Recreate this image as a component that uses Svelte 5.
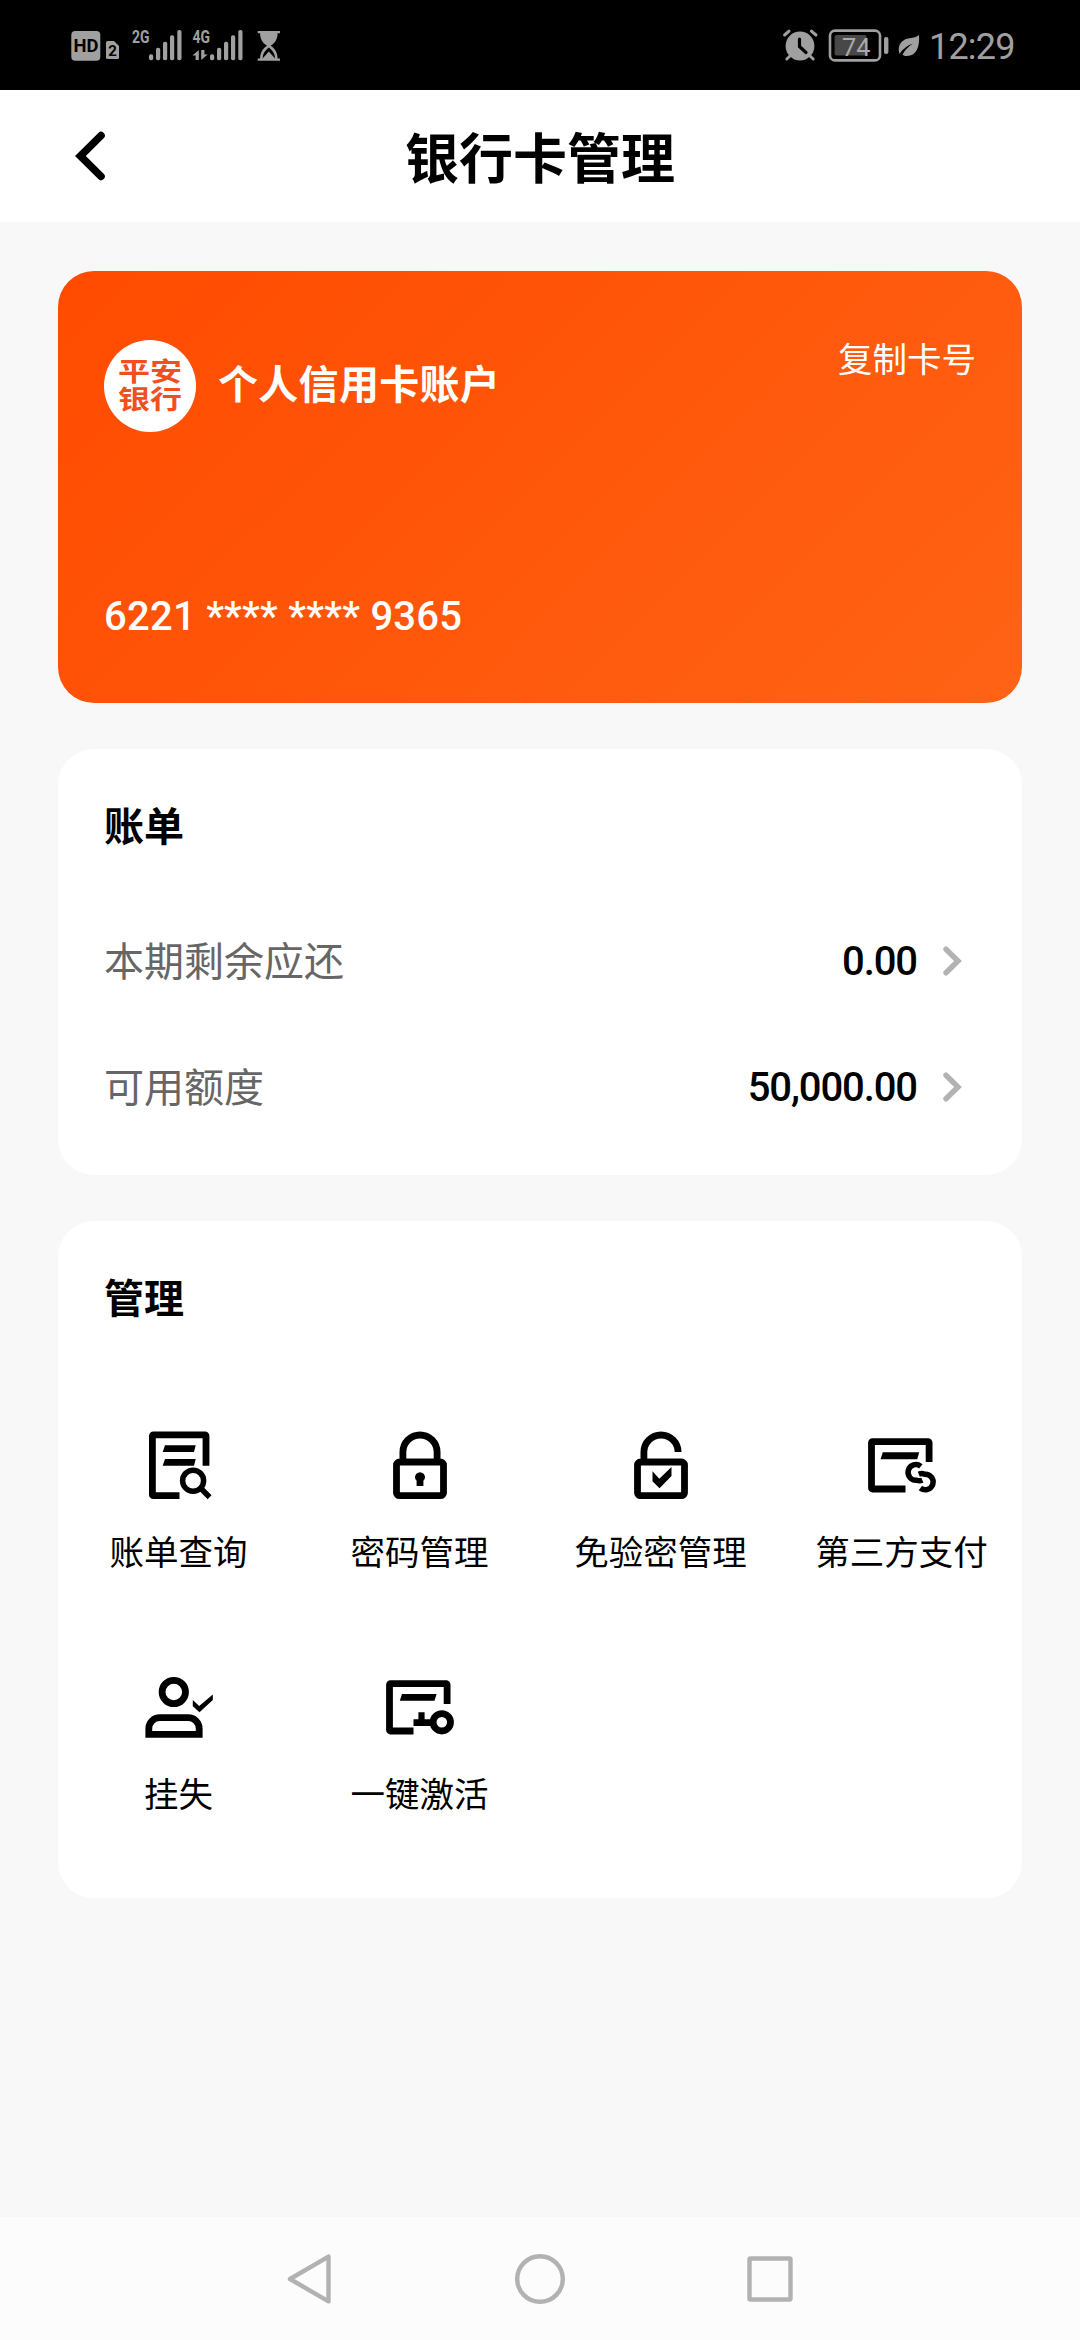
<script>
let bills = [
	{ label: '本期剩余应还', value: '0.00' },
	{ label: '可用额度', value: '50,000.00' }
];

// line: thick outline, thin: small detail outline, fill: solid shapes
let actions = [
	{
		label: '账单查询',
		line: 'M67 40.7V10.8a1 1 0 0 0 -1 -1H14.4a1 1 0 0 0 -1 1V69.7a1 1 0 0 0 1 1H40.5',
		thin: 'M43.6 55.7a10.5 10.5 0 1 0 21 0a10.5 10.5 0 1 0 -21 0M61.5 63L70.6 72.2',
		fill: 'M26 20.3H56.7L55 27H23.7zM26 34H56.7L55 40.7H23.7z'
	},
	{
		label: '密码管理',
		line: 'M19.5 37H60.5a3 3 0 0 1 3 3V67.7a3 3 0 0 1 -3 3H19.5a3 3 0 0 1 -3 -3V40a3 3 0 0 1 3 -3zM22.9 37V27.1a17.1 17.1 0 0 1 34.2 0V37',
		thin: '',
		fill: 'M36.6 61V55.8a5 5 0 1 1 6.8 0V61z'
	},
	{
		label: '免验密管理',
		line: 'M19.5 37H60.5a3 3 0 0 1 3 3V67.7a3 3 0 0 1 -3 3H19.5a3 3 0 0 1 -3 -3V40a3 3 0 0 1 3 -3zM22.9 37V27.1a17.1 17.1 0 0 1 34.2 0',
		thin: '',
		fill: 'M31.5 46.3L38.3 53.7L50.5 42V51L38.5 63.3L31.5 56.3z'
	},
	{
		label: '第三方支付',
		line: 'M67.1 37V17.7a1 1 0 0 0 -1 -1H10.5a1 1 0 0 0 -1 1V63a1 1 0 0 0 1 1H43.5',
		thin: 'M58.8 41.4A7.8 7.8 0 1 0 54.6 55.2Q57.4 56.4 60.4 55.2M58.4 63A7.8 7.8 0 1 0 62.6 49.2Q59.8 48 56.8 49.2',
		fill: 'M20.8 27.3H57.2L55.2 34.3H18.5z'
	},
	{
		label: '挂失',
		line: 'M23.1 25a11.7 11.7 0 1 0 23.4 0a11.7 11.7 0 1 0 -23.4 0M9.8 67.3V61.7a11 11 0 0 1 11 -11H49.2a11 11 0 0 1 11 11V67.3z',
		thin: '',
		fill: 'M53.8 33L60.2 39L73.8 27.5V33L60.5 45.3L53.8 39.3z'
	},
	{
		label: '一键激活',
		line: 'M67.1 37V17.7a1 1 0 0 0 -1 -1H10.5a1 1 0 0 0 -1 1V63a1 1 0 0 0 1 1H33.5M53.1 55.3a8.7 8.7 0 1 0 17.4 0a8.7 8.7 0 1 0 -17.4 0M33.5 55.7H53',
		thin: '',
		fill: 'M22 27H56.6L54.5 33.7H19.8zM38.4 45.3H44.6V53H38.4z'
	}
];

let bars = [
	{ x: 81, y: 29.3 },
	{ x: 88, y: 22.7 },
	{ x: 95, y: 16.7 },
	{ x: 102, y: 10.3 },
	{ x: 109.3, y: 5 }
];
</script>

<div class="screen">
	<div class="status">
		<svg width="216" height="40" viewBox="0 0 216 40" fill="#a0a0a0">
			<rect x="3.3" y="6" width="29" height="29.7" rx="4" />
			<text class="bold" x="5.6" y="27.4" font-size="18" textLength="25" lengthAdjust="spacingAndGlyphs" fill="#000">HD</text>
			<path d="M39.5 16H46L51 21V32.5a1.5 1.5 0 0 1 -1.5 1.5H39.5a1.5 1.5 0 0 1 -1.5 -1.5V17.5a1.5 1.5 0 0 1 1.5 -1.5z" />
			<text class="bold" x="40.2" y="30.8" font-size="15" fill="#000">2</text>
			<text class="bold" x="64" y="18.4" font-size="18.5" textLength="17.5" lengthAdjust="spacingAndGlyphs">2G</text>
			<text class="bold" x="124.5" y="18.4" font-size="18.5" textLength="17.5" lengthAdjust="spacingAndGlyphs">4G</text>
			{#each bars as bar}
				<rect x={bar.x} y={bar.y} width="4.2" height={35.3 - bar.y} rx="1.8" />
				<rect x={bar.x + 61} y={bar.y} width="4.2" height={35.3 - bar.y} rx="1.8" />
			{/each}
			<path d="M124.4 30.5L130.8 25V35H127.6V30.5zM133.2 25H136.4V29.6H139.6L133.2 35z" />
			<path d="M189.7 6H212V8.2H209.6C209.6 14 207 18 202.6 20.8C207 23.6 209.6 27.8 209.6 33.5H212V35.7H189.7V33.5H192.1C192.1 27.8 194.7 23.6 199.1 20.8C194.7 18 192.1 14 192.1 8.2H189.7z" />
			<path d="M194.6 33.4C194.8 28.8 197 25.4 200.8 22.6C204.6 25.4 206.9 28.8 207.1 33.4L200.8 26.4z" fill="#000" />
		</svg>
		<div class="right">
			<svg width="149" height="40" viewBox="0 0 149 40" fill="#a0a0a0">
				<circle cx="20" cy="21" r="14.4" />
				<path d="M4.6 10L9 6.2M36 10L31.4 6.2M10.5 30.5L6.8 34M29.5 30.5L33.2 34" stroke="#a0a0a0" stroke-width="3" stroke-linecap="round" />
				<path d="M19.5 14V21.5L26 27.5" fill="none" stroke="#000" stroke-width="3.2" stroke-linecap="round" />
				<rect x="50" y="5.6" width="50" height="29.8" rx="5" fill="none" stroke="#a0a0a0" stroke-width="2.6" />
				<rect x="54.6" y="10" width="32" height="20.5" rx="2" fill="#484848" />
				<text x="62" y="30.6" font-size="26.5" textLength="28.5" lengthAdjust="spacingAndGlyphs" fill="#aaa">74</text>
				<rect x="104" y="12" width="4.4" height="17" rx="2" />
				<path d="M139 10C140 22 136 31 127 31C125 31 123.5 30.5 122.5 29.5C125 25 128.5 21.5 133 18.5C127 20.5 122.5 24 119.5 29C116.5 19 123 13.5 131 13C135 12.5 137 11.5 139 10z" />
			</svg>
			<span class="time">12:29</span>
		</div>
	</div>

	<div class="header">
		<svg width="40" height="60" viewBox="0 0 40 60">
			<path d="M31 9.6L10.4 30L31 50.4" fill="none" stroke="#000" stroke-width="7.6" stroke-linecap="round" />
		</svg>
		<h1>银行卡管理</h1>
	</div>

	<div class="content">
		<div class="card">
			<div class="account">
				<div class="logo">
					<div class="mark"><span>平安</span><span>银行</span></div>
				</div>
				<span class="name">个人信用卡账户</span>
				<span class="copy">复制卡号</span>
			</div>
			<div class="number">6221 **** **** 9365</div>
		</div>

		<div class="panel bill">
			<h2>账单</h2>
			{#each bills as bill}
				<div class="row">
					<span class="label">{bill.label}</span>
					<span class="value">{bill.value}</span>
					<svg width="24" height="36" viewBox="0 0 24 36">
						<path d="M5 6.2L17 18L5 29.8" fill="none" stroke="#b2b2b2" stroke-width="5.4" stroke-linecap="round" />
					</svg>
				</div>
			{/each}
		</div>

		<div class="panel manage">
			<h2>管理</h2>
			<div class="actions">
				{#each actions as action}
					<div class="action">
						<svg width="80" height="80" viewBox="0 0 80 80">
							<path d={action.line} fill="none" stroke="#000" stroke-width="6.8" />
							<path d={action.thin} fill="none" stroke="#000" stroke-width="5.5" />
							<path d={action.fill} />
						</svg>
						<span>{action.label}</span>
					</div>
				{/each}
			</div>
		</div>
	</div>

	<div class="nav">
		<svg width="52" height="52" viewBox="0 0 52 52">
			<path d="M5 26L43.5 3.6V48.4z" />
		</svg>
		<svg width="52" height="52" viewBox="0 0 52 52">
			<circle cx="26" cy="26" r="22.8" />
		</svg>
		<svg width="52" height="52" viewBox="0 0 52 52">
			<rect x="5.5" y="5.5" width="41" height="41" rx="1" />
		</svg>
	</div>
</div>

<style>
:global(body) {
	margin: 0;
}

.screen {
	display: flex;
	flex-direction: column;
	width: 1080px;
	height: 2340px;
	background: #f8f8f8;
	color: #000;
	font-family: Roboto, "Noto Sans CJK SC", sans-serif;
}

svg {
	display: block;
	flex: none;
}

h1, h2 {
	margin: 0;
	font-weight: bold;
}

.status {
	display: flex;
	justify-content: space-between;
	align-items: center;
	height: 90px;
	padding: 0 64px 0 68px;
	background: #000;
	box-sizing: border-box;
}

.bold {
	font-weight: bold;
}

.right {
	display: flex;
	align-items: center;
}

.time {
	width: 87px;
	color: #a0a0a0;
	font-size: 36px;
	line-height: 40px;
	letter-spacing: -0.8px;
	padding-top: 4px;
	white-space: nowrap;
}

.header {
	display: grid;
	grid-template-columns: 40px 1fr 40px;
	align-items: center;
	height: 132px;
	padding: 0 70px;
	background: #fff;
}

h1 {
	font-size: 54px;
	line-height: 80px;
	text-align: center;
	padding-top: 10px;
}

.content {
	display: flex;
	flex-direction: column;
	flex: 1;
	padding: 49px 58px 0;
}

.card {
	display: flex;
	flex-direction: column;
	justify-content: space-between;
	height: 432px;
	padding: 69px 46px 62px;
	box-sizing: border-box;
	border-radius: 36px;
	background: linear-gradient(135deg, #ff4b00, #ff6315);
	color: #fff;
}

.account {
	display: flex;
	align-items: center;
}

.logo {
	display: flex;
	align-items: center;
	justify-content: center;
	width: 92px;
	height: 92px;
	border-radius: 50%;
	background: #fff;
}

.mark {
	display: flex;
	flex-direction: column;
	color: #f0501e;
	font-size: 32px;
	line-height: 34px;
	font-weight: bold;
	transform: scaleY(0.83);
}

.name {
	margin-left: 22px;
	font-size: 40px;
	font-weight: 700;
	line-height: 60px;
	letter-spacing: 0.3px;
}

.copy {
	align-self: flex-start;
	margin-left: auto;
	font-size: 34.5px;
	line-height: 40px;
}

.number {
	font-size: 40px;
	font-weight: 500;
	line-height: 48px;
	letter-spacing: 0.25px;
}

.panel {
	border-radius: 36px;
	background: #fff;
}

.bill {
	height: 426px;
	margin-top: 46px;
}

.manage {
	height: 677px;
	margin-top: 46px;
}

h2 {
	padding: 49px 46px 0;
	font-size: 40px;
	line-height: 60px;
}

.bill h2 {
	padding-bottom: 40px;
}

.row {
	display: flex;
	align-items: center;
	height: 126px;
	padding: 0 57px 0 46px;
	color: #666;
	font-size: 40px;
}

.label {
	padding-bottom: 4px;
}

.value {
	margin-left: auto;
	margin-right: 24px;
	color: #000;
	font-weight: 500;
	letter-spacing: -1.1px;
}

.actions {
	display: grid;
	grid-template-columns: repeat(4, 1fr);
	grid-auto-rows: 242px;
	padding-top: 95px;
}

.action {
	display: flex;
	flex-direction: column;
	align-items: center;
	font-size: 34.5px;
	line-height: 52px;
}

.action span {
	margin-top: 22px;
}

.nav {
	display: flex;
	justify-content: center;
	align-items: center;
	gap: 177.5px;
	height: 123px;
	background: #fcfcfc;
}

.nav path, .nav circle, .nav rect {
	fill: none;
	stroke: #b2b2b2;
	stroke-width: 4.4;
	stroke-linejoin: round;
}
</style>
